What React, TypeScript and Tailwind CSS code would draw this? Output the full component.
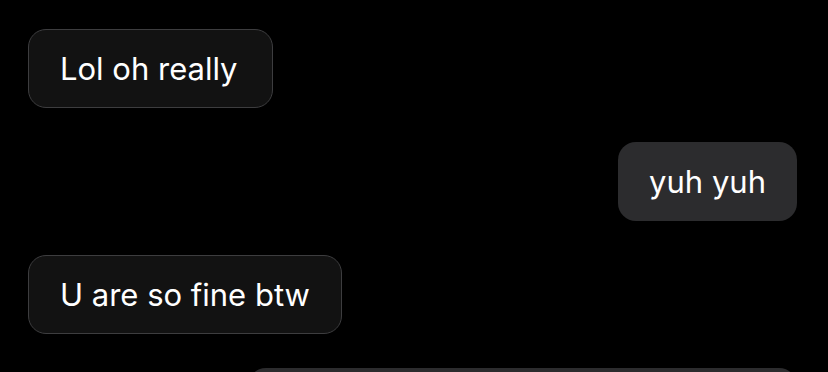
import React from 'react';

type Message = {
  text: string;
  mine: boolean;
  width?: string;
};

// last bubble is only peeking in at the bottom edge, its text isn't visible yet
const messages: Message[] = [
  { text: 'Lol oh really', mine: false, width: 'w-[245px]' },
  { text: 'yuh yuh', mine: true },
  { text: 'U are so fine btw', mine: false },
  { text: '', mine: true, width: 'w-[549px] h-[78px]' },
];

function Bubble({ text, mine, width = '' }: Message): React.JSX.Element {
  if (mine) {
    return (
      <div
        className={`self-end rounded-[18px] bg-[#2c2c2e] px-[31px] py-[20px] text-[31px] leading-[39px] text-white ${width}`}
      >
        {text}
      </div>
    );
  }

  return (
    <div
      className={`self-start rounded-[18px] border-[1.5px] border-[#3d3d3f] bg-[#121212] px-[31px] py-[19px] text-[31px] leading-[39px] text-white ${width}`}
    >
      {text}
    </div>
  );
}

export default function App(): React.JSX.Element {
  return (
    <div
      className="h-[372px] w-[828px] overflow-hidden bg-black"
      style={{ fontFamily: 'Inter, "Noto Sans", sans-serif' }}
    >
      <div className="flex flex-col gap-[34px] pl-[28px] pr-[31px] pt-[29px]">
        {messages.map((m, i) => (
          <Bubble key={i} text={m.text} mine={m.mine} width={m.width} />
        ))}
      </div>
    </div>
  );
}
